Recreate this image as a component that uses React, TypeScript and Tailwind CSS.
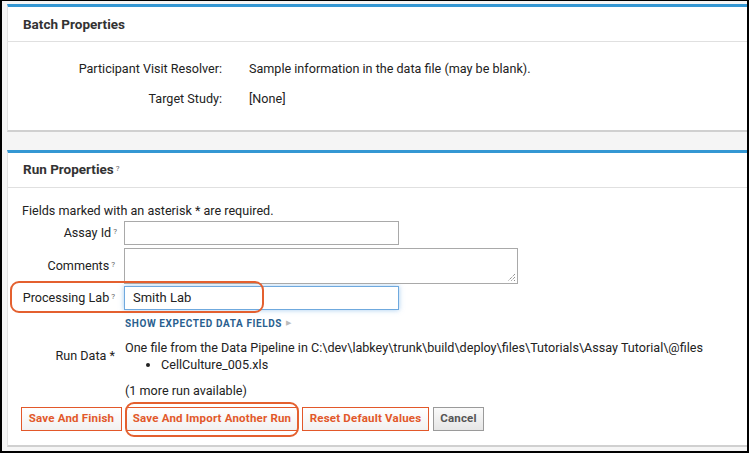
import React from "react";

const Help = () => (
  <sup className="ml-[2px] text-[8px] text-[#666] relative -top-[3px]">?</sup>
);

const Btn = ({ children, w, gray }: { children: React.ReactNode; w: string; gray?: boolean }) => (
  <button
    className={
      (gray
        ? "border-[#9a9a9a] text-[#555] bg-gradient-to-b from-[#fafafa] to-[#e6e6e6] "
        : "border-[#e2582a] text-[#e2582a] bg-gradient-to-b from-white to-[#f1f1f1] ") +
      "h-[24px] border text-[11.5px] font-bold tracking-[0.2px] flex items-center justify-center shrink-0 whitespace-nowrap " +
      w
    }
  >
    {children}
  </button>
);

export default function App() {
  return (
    <div
      className="relative w-[749px] h-[453px] overflow-hidden bg-[#f5f5f5] border-black border-l-2 border-r-2 border-t border-b-2 pl-[5px] pt-[3px] text-[#222]"
      style={{ fontFamily: "Roboto, 'Liberation Sans', sans-serif" }}
    >
      {/* Batch Properties panel */}
      <div className="bg-white border-t-[3px] border-[#3497d3] border-l border-l-[#e2e2e2] border-b-2 border-b-[#d0d0d0] h-[128px] flex flex-col">
        <div className="h-[35px] pt-[9px] pl-[15px] border-b border-[#e0e0e0] shrink-0 leading-[16px]">
          <span className="text-[13.5px] leading-[16px] font-bold text-[#333]">Batch Properties</span>
        </div>
        <div className="grid grid-cols-[214px_1fr] gap-x-[27px] auto-rows-[30px] items-center pt-[12px] text-[12.6px]">
          <div className="text-right">Participant Visit Resolver:</div>
          <div>Sample information in the data file (may be blank).</div>
          <div className="text-right">Target Study:</div>
          <div>[None]</div>
        </div>
      </div>

      {/* Run Properties panel */}
      <div className="mt-[18px] bg-white border-t-[3px] border-[#3497d3] border-l border-l-[#e2e2e2] border-b-2 border-b-[#d0d0d0] h-[297px] flex flex-col">
        <div className="h-[35px] pt-[8px] pl-[15px] border-b border-[#e0e0e0] shrink-0 leading-[16px]">
          <span className="text-[13.5px] leading-[16px] font-bold text-[#333]">Run Properties</span>
          <Help />
        </div>
        <div className="pl-[14px] pt-[14px] text-[12.6px]">
          <div className="h-[17px] leading-[17px]">Fields marked with an asterisk * are required.</div>
          <div className="grid grid-cols-[102px_1fr] gap-y-[3px] items-center mt-[2px] -ml-[6px]">
            <div className="text-right pr-[1px] whitespace-nowrap">
              Assay Id<Help />
            </div>
            <div className="pl-[6px]">
              <div className="w-[275px] h-[24px] border border-[#a9a9a9] bg-white" />
            </div>
            <div className="text-right pr-[3px] whitespace-nowrap">
              Comments<Help />
            </div>
            <div className="pl-[6px]">
              <div className="relative w-[394px] h-[36px] border border-[#a9a9a9] bg-white">
                <svg className="absolute right-[1px] bottom-[1px]" width="9" height="9" viewBox="0 0 9 9">
                  <path d="M8 1 L1 8 M8 4 L4 8 M8 7 L7 8" stroke="#666" strokeWidth="1" strokeDasharray="1 1" />
                </svg>
              </div>
            </div>
            <div className="text-right pr-[3px] whitespace-nowrap">
              Processing Lab<Help />
            </div>
            <div className="pl-[6px] -mt-[1px]">
              <div className="w-[275px] h-[24px] border border-[#6fa9de] bg-white shadow-[0_0_5px_rgba(102,168,230,0.6)] flex items-center pl-[8px] text-[13px]">
                Smith Lab
              </div>
            </div>
            <div />
            <div className="h-[20px] flex items-center pl-[7px]">
              <span className="text-[10px] font-bold text-[#2a5f8f] tracking-[0.6px]">SHOW EXPECTED DATA FIELDS</span>
              <span className="ml-[4px] text-[7px] text-[#bbb]">▶</span>
            </div>
            <div className="text-right pr-[3px] self-center pt-[3px] whitespace-nowrap">Run Data *</div>
            <div className="pt-[3px] pl-[7px]">
              <div className="h-[17px] leading-[17px] whitespace-nowrap">
                One file from the Data Pipeline in C:\dev\labkey\trunk\build\deploy\files\Tutorials\Assay Tutorial\@files
              </div>
              <ul className="h-[17px] leading-[17px] list-disc pl-[36px]">
                <li>CellCulture_005.xls</li>
              </ul>
            </div>
            <div />
            <div className="pl-[7px] pt-[6px] h-[23px] leading-[17px]">(1 more run available)</div>
          </div>
          <div className="flex gap-[4px] mt-[8px] -ml-[1px]">
            <Btn w="w-[101px]">Save And Finish</Btn>
            <Btn w="w-[172px]">Save And Import Another Run</Btn>
            <Btn w="w-[127px]">Reset Default Values</Btn>
            <Btn w="w-[51px]" gray>
              Cancel
            </Btn>
          </div>
        </div>
      </div>

      {/* annotation ovals */}
      <div className="absolute left-[8px] top-[280px] w-[254px] h-[32px] border-2 border-[#e4602f] rounded-[9px] pointer-events-none" />
      <div className="absolute left-[123px] top-[401px] w-[174px] h-[35px] border-2 border-[#e4602f] rounded-[9px] pointer-events-none" />
    </div>
  );
}
